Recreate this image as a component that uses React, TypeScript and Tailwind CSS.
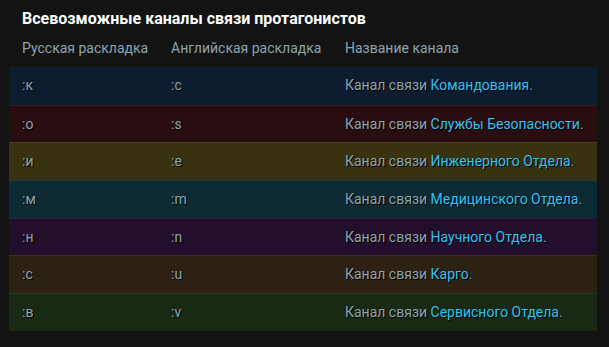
import React from "react";

const rows = [
  { ru: ":к", en: ":c", name: "Командования", bg: "bg-[#0e1c2f]", bd: "border-[#1a2a3d]" },
  { ru: ":о", en: ":s", name: "Службы Безопасности", bg: "bg-[#2a0d10]", bd: "border-[#3a1a1c]" },
  { ru: ":и", en: ":e", name: "Инженерного Отдела", bg: "bg-[#393211]", bd: "border-[#4a421f]" },
  { ru: ":м", en: ":m", name: "Медицинского Отдела", bg: "bg-[#0e2a33]", bd: "border-[#1b3a43]" },
  { ru: ":н", en: ":n", name: "Научного Отдела", bg: "bg-[#230e2b]", bd: "border-[#331c3a]" },
  { ru: ":с", en: ":u", name: "Карго", bg: "bg-[#2d2113]", bd: "border-[#3d2f1f]" },
  { ru: ":в", en: ":v", name: "Сервисного Отдела", bg: "bg-[#182a14]", bd: "border-[#253821]" },
];

export default function App() {
  return (
    <div
      className="w-[609px] h-[347px] bg-[#131313] overflow-hidden"
      style={{ fontFamily: "Roboto, 'Noto Sans', sans-serif" }}
    >
      <div className="pt-[8px] pl-[22px] text-[16px] leading-[22px] font-bold text-white">
        Всевозможные каналы связи протагонистов
      </div>
      <div className="flex pl-[22px] mt-[9px] text-[14px] leading-[18px] text-[#8ea4ae]">
        <div className="w-[149px]">Русская раскладка</div>
        <div className="w-[174px]">Английская раскладка</div>
        <div>Название канала</div>
      </div>
      <div className="mx-[9px] mt-[10px] w-[588px]">
        {rows.map((r, i) => (
          <div
            key={i}
            className={`flex items-center h-[37.7px] pl-[13px] text-[14px] text-[#8ea4ae] ${r.bg} ${i > 0 ? "border-t " + r.bd : ""}`}
            style={{ textShadow: "1px 1px 0 #000" }}
          >
            <div className="w-[149px]">{r.ru}</div>
            <div className="w-[174px]">{r.en}</div>
            <div>
              Канал связи <span className="text-[#2ec3f2]">{r.name}</span>.
            </div>
          </div>
        ))}
      </div>
    </div>
  );
}
